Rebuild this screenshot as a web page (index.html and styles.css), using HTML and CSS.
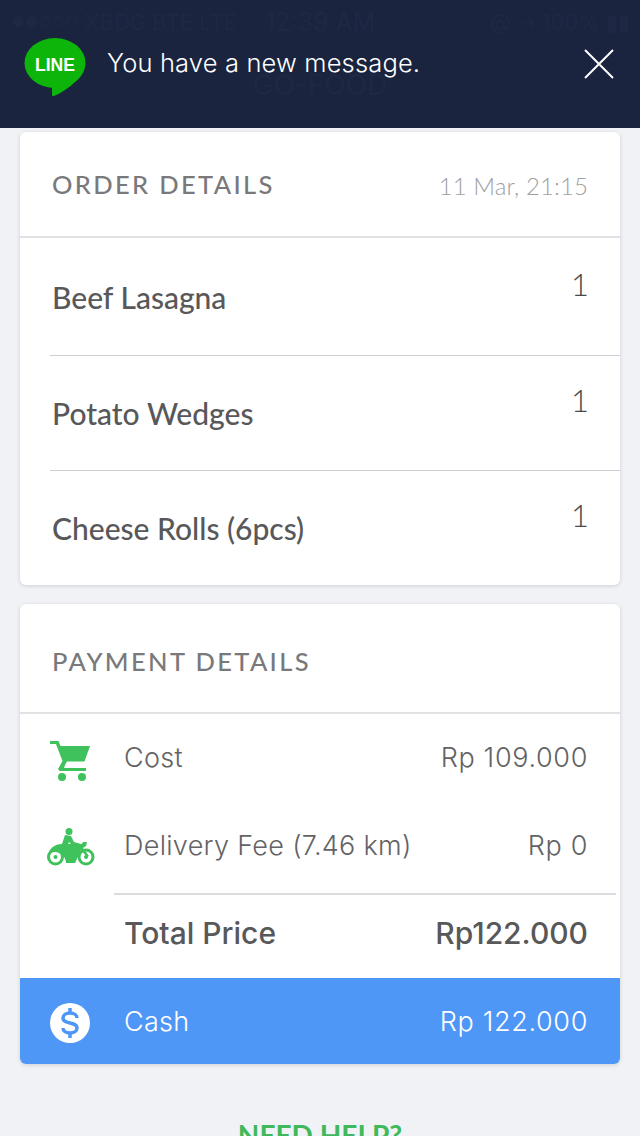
FILE: index.html
```html
<!DOCTYPE html>
<html lang="en">

<head>
    <meta charset="UTF-8">
    <meta name="viewport" content="width=device-width, initial-scale=1.0">
    <title>GO-FOOD</title>
    <link rel="stylesheet" href="styles.css">
</head>

<body>
    <header class="banner">
        <div class="ghost-status">
            <span class="ghost-dots">●●○○○</span>
            <span>XBDG BTE LTE</span>
            <span class="ghost-time">12:39 AM</span>
            <span class="ghost-right">@ ⇢ 100% ▮▮</span>
        </div>
        <div class="ghost-title">GO-FOOD</div>
        <svg class="line-logo" width="62" height="58" viewBox="0 0 62 58">
            <ellipse cx="31" cy="25" rx="30.500" ry="25" fill="#0db50a" />
            <path d="M28 46v11c0 1 1 1 2 1 7-3 15-8 22-15z" fill="#0db50a" />
            <text x="31" y="33" class="line-text" text-anchor="middle" textLength="40" lengthAdjust="spacingAndGlyphs">LINE</text>
        </svg>
        <span class="banner-text">You have a new message.</span>
        <svg class="banner-close" width="32" height="32" viewBox="0 0 32 32">
            <path d="M2 2l28 28M30 2L2 30" stroke="#fff" stroke-width="2" fill="none" />
        </svg>
    </header>

    <main class="content">
        <section class="card">
            <div class="card-head">
                <h2>ORDER DETAILS</h2>
                <span class="order-date">11 Mar, 21:15</span>
            </div>
            <div class="item first">
                <span class="item-name">Beef Lasagna</span>
                <span class="item-qty">1</span>
            </div>
            <div class="item">
                <span class="item-name">Potato Wedges</span>
                <span class="item-qty">1</span>
            </div>
            <div class="item">
                <span class="item-name">Cheese Rolls (6pcs)</span>
                <span class="item-qty">1</span>
            </div>
        </section>

        <section class="card">
            <div class="card-head pay-head">
                <h2>PAYMENT DETAILS</h2>
            </div>
            <div class="pay-row cost-row">
                <svg class="pay-icon" width="40" height="40" viewBox="0 0 40 40">
                    <path d="M0 0h8.500l2 5H40l-5.500 15.500H17l-2 3.500-1 3H36v3H9.500L8 28l4.500-8L6 3H0z" fill="#3fc25c" />
                    <circle cx="12" cy="36" r="4" fill="#3fc25c" />
                    <circle cx="32" cy="36" r="4" fill="#3fc25c" />
                </svg>
                <span class="pay-label">Cost</span>
                <span class="pay-value">Rp 109.000</span>
            </div>
            <div class="pay-row fee-row">
                <svg class="pay-icon" width="48" height="38" viewBox="0 0 48 38">
                    <circle cx="22" cy="3.500" r="3.500" fill="#3fc25c" />
                    <path d="M18 7l6 1 3 6 7 2v2l-9-1-3-3-2 5h-6z" fill="#3fc25c" />
                    <path d="M2 24c2-5 7-8 13-8h20l1-2h4l-1 4-3 2 6 8-2 1-6-7-6 13H19c0-6-5-11-11-11z" fill="#3fc25c" />
                    <circle cx="8.500" cy="29" r="7" fill="none" stroke="#3fc25c" stroke-width="3" />
                    <circle cx="8.500" cy="29" r="2" fill="#3fc25c" />
                    <circle cx="39" cy="29" r="7" fill="none" stroke="#3fc25c" stroke-width="3" />
                    <circle cx="39" cy="29" r="2" fill="#3fc25c" />
                </svg>
                <span class="pay-label">Delivery Fee (7.46 km)</span>
                <span class="pay-value">Rp 0</span>
            </div>
            <div class="total-row">
                <span class="total-label">Total Price</span>
                <span class="total-value">Rp122.000</span>
            </div>
            <div class="cash-row">
                <svg class="pay-icon" width="40" height="40" viewBox="0 0 40 40">
                    <circle cx="20" cy="20" r="20" fill="#fff" />
                    <path d="M27 15c0-3-3-5-7-5s-7 2-7 5c0 7 14 3 14 10 0 3-3 5-7 5s-7-2-7-5" fill="none" stroke="#4f97f7" stroke-width="3.500" />
                    <path d="M20 5v6M20 29v6" stroke="#4f97f7" stroke-width="3.500" />
                </svg>
                <span class="pay-label">Cash</span>
                <span class="pay-value">Rp 122.000</span>
            </div>
        </section>

        <div class="help">NEED HELP?</div>
    </main>
</body>

</html>
```

FILE: styles.css
```css
html,
body {
    margin: 0;
    padding: 0;
}

body {
    width: 640px;
    height: 1136px;
    overflow: hidden;
    background-color: #f1f2f6;
    font-family: Inter, "Liberation Sans", sans-serif;
    color: #5d5d5f;
}

/* notification banner */
.banner {
    position: relative;
    height: 128px;
    box-sizing: border-box;
    padding: 38px 24px 0 24px;
    display: flex;
    align-items: flex-start;
    background-color: #1a243f;
}

.ghost-status {
    position: absolute;
    left: 12px;
    right: 10px;
    top: 9px;
    display: flex;
    gap: 6px;
    font-size: 22px;
    color: #1e2843;
}

.ghost-dots {
    font-size: 14px;
    line-height: 26px;
    letter-spacing: 0.5px;
}

.ghost-time {
    margin-left: 22px;
    font-size: 25px;
    line-height: 26px;
}

.ghost-right {
    margin-left: auto;
}

.ghost-title {
    position: absolute;
    left: 0;
    right: 0;
    top: 68px;
    text-align: center;
    font-size: 28px;
    color: #1e2843;
}

.line-logo {
    flex: none;
}

.line-text {
    font-family: "Liberation Sans", sans-serif;
    font-size: 19px;
    font-weight: 700;
    fill: #fff;
}

.banner-text {
    position: relative;
    margin-left: 21px;
    margin-top: 9px;
    font-size: 25.500px;
    font-weight: 300;
    letter-spacing: 0.150px;
    color: #fff;
}

.banner-close {
    margin-left: auto;
    margin-top: 10px;
    margin-right: 1px;
}

/* cards */
.content {
    padding: 4px 20px 0 20px;
    display: flex;
    flex-direction: column;
    gap: 19px;
}

.card {
    background-color: #fff;
    border-radius: 6px;
    box-shadow: 0 1px 4px rgba(0, 0, 0, 0.14);
    overflow: hidden;
}

.card-head {
    height: 106px;
    box-sizing: border-box;
    padding: 0 32px;
    display: flex;
    justify-content: space-between;
    align-items: center;
    border-bottom: 2px solid #e2e2e4;
}

.pay-head {
    height: 110px;
    padding-top: 5px;
}

h2 {
    margin: 0;
    font-family: Lato, sans-serif;
    font-size: 25.500px;
    font-weight: 500;
    letter-spacing: 2.350px;
    color: #79797b;
}

.order-date {
    margin-top: 3px;
    font-family: Lato, sans-serif;
    font-size: 24px;
    font-weight: 300;
    letter-spacing: 0.100px;
    color: #a0a0a2;
}

.item {
    height: 115px;
    margin-left: 30px;
    box-sizing: border-box;
    padding: 25px 31px 0 2px;
    display: flex;
    justify-content: space-between;
    align-items: flex-start;
    border-top: 1px solid #cfcfd1;
}

.item.first {
    height: 117px;
    padding-top: 41px;
    border-top: none;
}

.item-name {
    padding-top: 14px;
    font-family: Lato, sans-serif;
    font-size: 30px;
    font-weight: 500;
    color: #58585a;
}

.first .item-name {
    padding-top: 0;
}

.item-qty {
    font-family: Lato, sans-serif;
    font-size: 31px;
    font-weight: 300;
    color: #4a4a4c;
}

.first .item-qty {
    margin-top: -14px;
}

/* payment */
.pay-row,
.cash-row {
    display: flex;
    align-items: center;
    padding: 0 32px 0 30px;
}

.cost-row {
    height: 87px;
}

.cost-row .pay-icon {
    margin-top: 6px;
}

.fee-row {
    height: 88px;
    margin-bottom: 4px;
    padding-left: 27px;
}

.fee-row .pay-icon {
    margin-top: 4px;
}

.fee-row .pay-label {
    margin-left: 29px;
}

.pay-icon {
    flex: none;
}

.cash-row .pay-icon {
    margin-top: 4px;
}

.pay-label {
    margin-left: 34px;
    font-size: 27px;
    font-weight: 300;
    letter-spacing: 0.300px;
    color: #636365;
}

.pay-value {
    margin-left: auto;
    font-size: 27px;
    font-weight: 300;
    letter-spacing: 0.650px;
    color: #636365;
}

.total-row {
    height: 85px;
    margin: 0 4px 0 94px;
    box-sizing: border-box;
    padding: 0 28px 8px 10px;
    display: flex;
    justify-content: space-between;
    align-items: center;
    border-top: 2px solid #dcdcde;
}

.total-label,
.total-value {
    font-size: 30px;
    font-weight: 500;
    color: #58585a;
}

.cash-row {
    height: 86px;
    background-color: #4f97f7;
}

.cash-row .pay-label,
.cash-row .pay-value {
    color: #fff;
}

.help {
    margin-top: 35px;
    text-align: center;
    font-family: Lato, sans-serif;
    font-size: 28px;
    font-weight: 700;
    color: #3fb95b;
}
```
